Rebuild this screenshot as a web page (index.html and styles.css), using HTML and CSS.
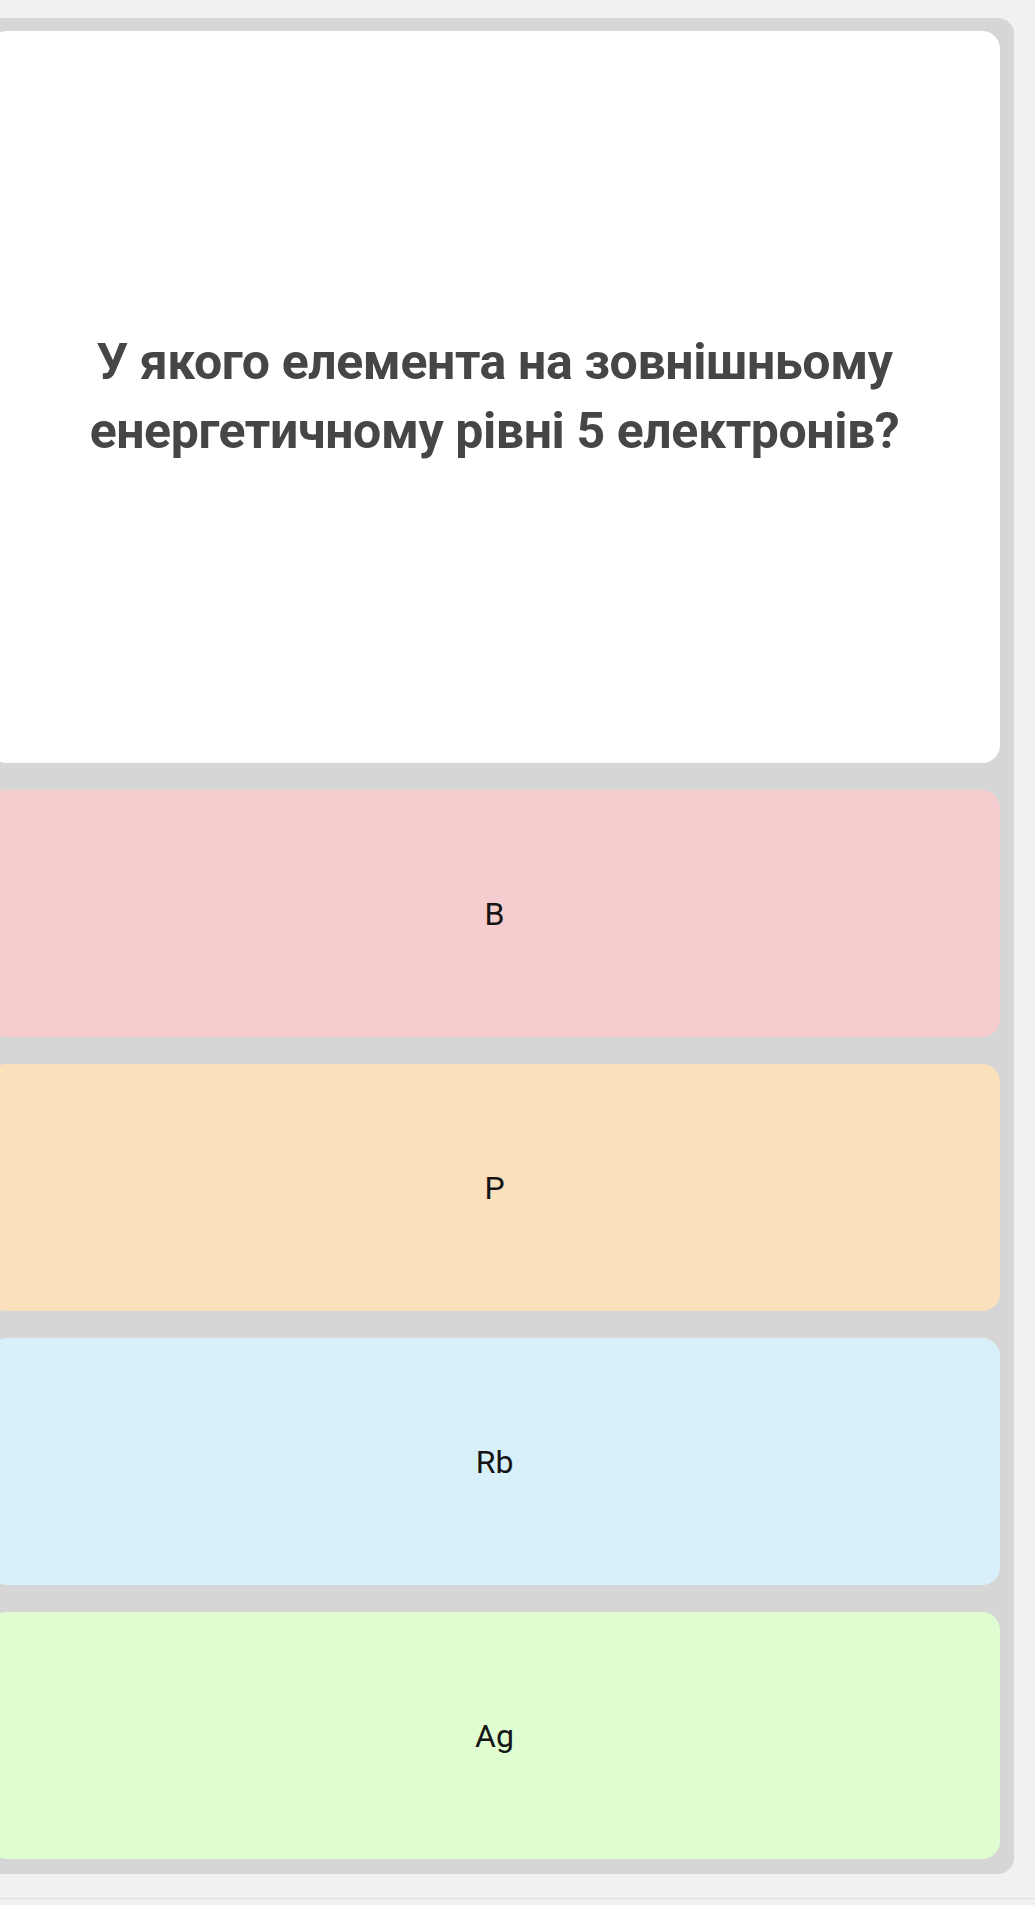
FILE: index.html
```html
<!DOCTYPE html>
<html>
	<head>
		<link rel="stylesheet" href="styles.css">
	</head>
	<body>
		<div class="page">
			<div class="quiz">
				<div class="question">
					<h1>У якого елемента на зовнішньому енергетичному рівні 5 електронів?</h1>
				</div>
				<div class="answer answer-red">B</div>
				<div class="answer answer-orange">P</div>
				<div class="answer answer-blue">Rb</div>
				<div class="answer answer-green">Ag</div>
			</div>
		</div>
	</body>
</html>
```

FILE: styles.css
```css
html, body {
	margin: 0;
	padding: 0;
}
body {
	font-family: Roboto, "Liberation Sans", Arial, sans-serif;
	background: #f1f1f1;
	overflow: hidden;
	height: 1905px;
}
.page {
	padding-top: 18px;
	height: 1899px;
	border-bottom: 1px solid #e0e0e0;
	box-sizing: border-box;
}
.quiz {
	margin-left: -25px;
	width: 1039px;
	background: #d6d6d6;
	border-radius: 16px;
	padding: 13px 14px 15px 14px;
	box-sizing: border-box;
	display: flex;
	flex-direction: column;
	gap: 27px;
}
.question {
	background: #fff;
	border-radius: 18px;
	height: 732px;
	display: flex;
	align-items: center;
	justify-content: center;
	padding: 0 60px;
	box-sizing: border-box;
}
h1 {
	margin: 0;
	font-size: 50px;
	line-height: 69px;
	font-weight: 700;
	color: #464646;
	text-align: center;
	letter-spacing: -0.4px;
}
.answer {
	height: 247px;
	border-radius: 18px;
	display: flex;
	align-items: center;
	justify-content: center;
	font-size: 32px;
	color: #151515;
}
.answer-red {
	background: #f6cdce;
}
.answer-orange {
	background: #fbe1bb;
}
.answer-blue {
	background: #d8f0fa;
}
.answer-green {
	background: #dffdd0;
}
```
